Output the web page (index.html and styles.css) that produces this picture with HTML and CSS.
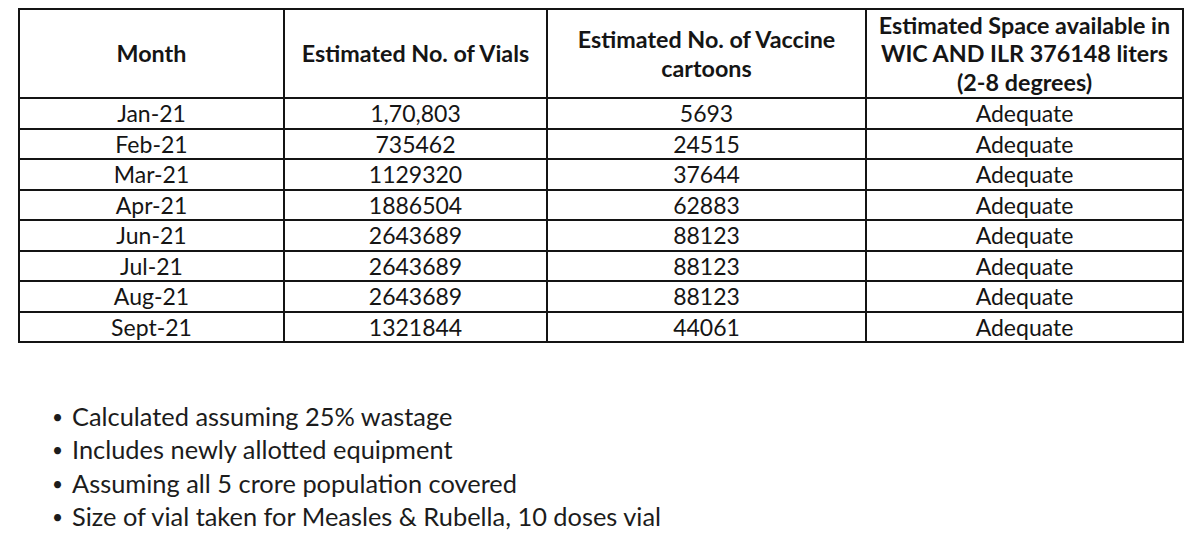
FILE: index.html
```html
<!DOCTYPE html>
<html>
<head>
<meta charset="utf-8">
<link rel="stylesheet" href="styles.css">
</head>
<body>
<div class="page">
  <table class="data">
    <colgroup>
      <col class="c1"><col class="c2"><col class="c3"><col class="c4">
    </colgroup>
    <thead>
      <tr>
        <th>Month</th>
        <th>Estimated No. of Vials</th>
        <th>Estimated No. of Vaccine<br>cartoons</th>
        <th>Estimated Space available in<br>WIC AND ILR 376148 liters<br>(2-8 degrees)</th>
      </tr>
    </thead>
    <tbody>
      <tr><td>Jan-21</td><td>1,70,803</td><td>5693</td><td>Adequate</td></tr>
      <tr><td>Feb-21</td><td>735462</td><td>24515</td><td>Adequate</td></tr>
      <tr><td>Mar-21</td><td>1129320</td><td>37644</td><td>Adequate</td></tr>
      <tr><td>Apr-21</td><td>1886504</td><td>62883</td><td>Adequate</td></tr>
      <tr><td>Jun-21</td><td>2643689</td><td>88123</td><td>Adequate</td></tr>
      <tr><td>Jul-21</td><td>2643689</td><td>88123</td><td>Adequate</td></tr>
      <tr><td>Aug-21</td><td>2643689</td><td>88123</td><td>Adequate</td></tr>
      <tr><td>Sept-21</td><td>1321844</td><td>44061</td><td>Adequate</td></tr>
    </tbody>
  </table>
  <ul class="notes">
    <li>Calculated assuming 25% wastage</li>
    <li>Includes newly allotted equipment</li>
    <li>Assuming all 5 crore population covered</li>
    <li>Size of vial taken for Measles &amp; Rubella, 10 doses vial</li>
  </ul>
</div>
</body>
</html>
```

FILE: styles.css
```css
html, body {
  margin: 0;
  padding: 0;
  background: #ffffff;
}
.page {
  width: 1200px;
  height: 545px;
  padding: 8px 0 0 18px;
  box-sizing: border-box;
  font-family: Lato, "Open Sans", sans-serif;
  color: #151515;
  overflow: hidden;
}
.data {
  border-collapse: collapse;
  table-layout: fixed;
  width: 1164px;
}
.c1 { width: 265px; }
.c2 { width: 263px; }
.c3 { width: 319px; }
.c4 { width: 317px; }
.data th,
.data td {
  border: 2px solid #141414;
  text-align: center;
  padding: 0 2px;
  white-space: nowrap;
}
.data th {
  height: 87px;
  font-weight: 700;
  font-size: 23.3px;
  line-height: 28.5px;
}
.data td {
  height: 28.5px;
  font-size: 23px;
  line-height: 28px;
  font-weight: 400;
}
.notes {
  margin: 57px 0 0 0;
  padding: 0 0 0 54px;
  list-style: none;
  font-size: 25.4px;
  line-height: 33.4px;
  color: #1c1c1c;
}
.notes li {
  position: relative;
}
.notes li::before {
  content: "\2022";
  position: absolute;
  left: -20px;
  top: 0;
  font-size: 19px;
}
```
